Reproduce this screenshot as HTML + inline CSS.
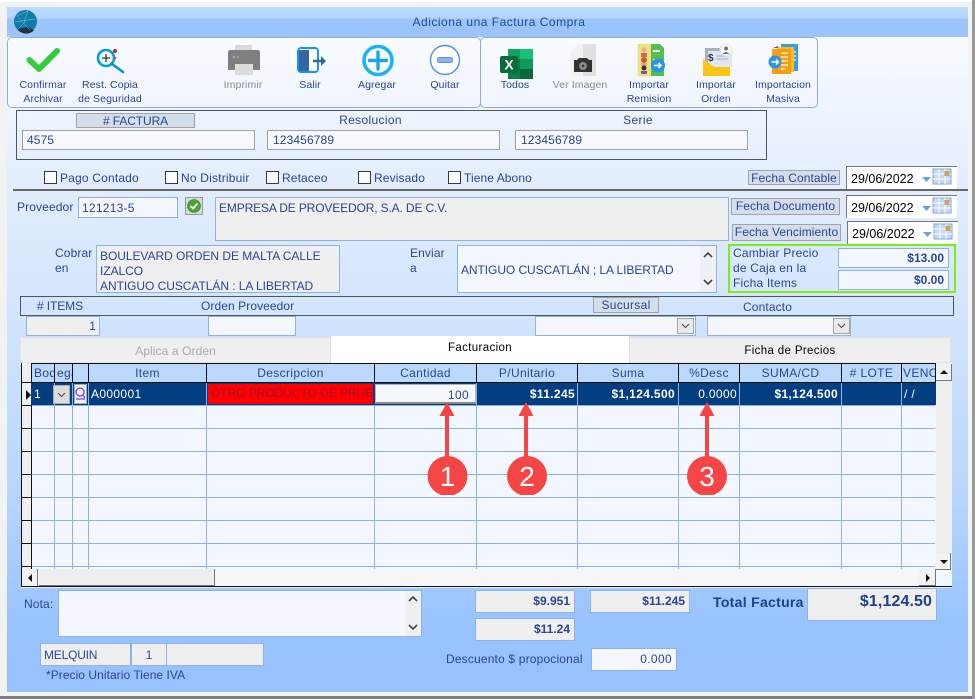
<!DOCTYPE html>
<html><head><meta charset="utf-8">
<style>
html,body{margin:0;padding:0;width:975px;height:699px;overflow:hidden;background:#f2f2f2;font-family:"Liberation Sans",sans-serif;font-size:12px;color:#2a4596;}
div,span,svg{position:absolute;box-sizing:border-box;}
.t{white-space:nowrap;letter-spacing:.12px;line-height:14px;}
.c{text-align:center;}
.r{text-align:right;}
.tb{font-size:10.5px;letter-spacing:.1px;line-height:14px;text-align:center;white-space:nowrap;color:#2a4596;}
.in{background:#f4f7fe;border:1px solid #8fb2e6;}
.ro{background:#efefef;border:1px solid #8fb2e6;}
.g{background:#f7f9fd;border:1px solid #a2a2a2;}
.lb{background:#d3deea;border:1px solid #a3a3a3;text-align:center;white-space:nowrap;letter-spacing:.08px;}
.cb{width:13px;height:13px;background:#fbfcff;border:1px solid #3a3a3a;}
.v{width:1px;background:#8fb2e6;top:383px;height:186px;}
.hl{left:31px;width:904px;height:1px;background:#8fb2e6;}
.h{top:363px;height:20px;background:#bcd9fb;text-align:center;line-height:19px;letter-spacing:.35px;white-space:nowrap;overflow:hidden;border-left:1px solid #111;border-top:1px solid #111;border-bottom:1px solid #111;}
.d{top:383px;height:22px;line-height:22px;color:#fff;white-space:nowrap;letter-spacing:.35px;overflow:hidden;}
.date{background:#fff;border-top:1px solid #777;border-left:1px solid #777;width:111px;height:23px;color:#000;font-size:12.5px;line-height:24px;padding-left:4px;white-space:nowrap;}
</style></head><body>
<div style="left:0;top:0;width:975px;height:2px;background:#fff"></div>
<div style="left:0;top:696px;width:975px;height:3px;background:#7d7d7d"></div>
<div style="left:972px;top:0;width:3px;height:699px;background:#9a9a9a"></div>
<div style="left:7px;top:7px;width:961px;height:685px;background:linear-gradient(#f9fbff 30px,#e6f0fe 150px,#cfe3fe 330px,#b9d6ff 480px,#98c3ff 620px,#97c2ff 685px)"></div>
<div style="left:7px;top:7px;width:961px;height:30px;background:linear-gradient(#bcdcff 0,#b2d4ff 11px,#9bc5fb 12px,#9bc4fa 30px)"></div>

<svg style="left:14px;top:10px" width="24" height="24" viewBox="0 0 24 24"><circle cx="11.500" cy="11.500" r="11.500" fill="#0f7ba8"/><path d="M3 19a11.500 11.500 0 0 0 17 1.500L14 17z" fill="#27303f"/><path d="M3 6l13 14M3 6l11-5M14 1l-4 12M1 12l20-3M10 13l-7 7" stroke="#8fc4dc" stroke-width=".5" fill="none"/></svg>
<div class="t c" style="left:7px;top:15px;width:984px;color:#1f4a94;letter-spacing:.5px">Adiciona una Factura Compra</div>

<!-- toolbars -->
<div style="left:7px;top:37px;width:474px;height:71px;border:1px solid #8cadde;border-radius:5px;background:linear-gradient(#f8fbff,#f1f6fe)"></div>
<div style="left:480px;top:37px;width:338px;height:71px;border:1px solid #8cadde;border-radius:5px;background:linear-gradient(#f8fbff,#f1f6fe)"></div>

<svg style="left:26px;top:47px" width="34" height="26" viewBox="0 0 34 26"><path d="M3.500 13L13 22 31 4" fill="none" stroke="#36cb3d" stroke-width="6" stroke-linecap="round" stroke-linejoin="round"/></svg>
<svg style="left:95px;top:47px" width="30" height="27" viewBox="0 0 30 27"><circle cx="11" cy="11" r="8" fill="#eef8fc" stroke="#0aa0c6" stroke-width="2.600"/><path d="M7 11h8M11 7v8" stroke="#333" stroke-width="1.300"/><path d="M17 17l11 8" stroke="#0a90c8" stroke-width="2.600" stroke-linecap="round"/><circle cx="20" cy="4" r="2" fill="#a33"/><circle cx="20" cy="11" r="1.200" fill="#e33"/></svg>
<svg style="left:227px;top:45px" width="34" height="31" viewBox="0 0 34 31"><path d="M8 0h17v9H8z" fill="#d9d9d9"/><path d="M1 7q0-2 3-2h26q3 0 3 2v18H1z" fill="#7f7f7f"/><path d="M8 19h18v11H8z" fill="#dcdcdc"/><circle cx="7" cy="12" r="1.200" fill="#a8a8a8"/><circle cx="11" cy="12" r="1" fill="#a8a8a8"/></svg>
<svg style="left:297px;top:47px" width="30" height="27" viewBox="0 0 30 27"><rect x="1" y="1" width="20" height="24" rx="3" fill="#fff" stroke="#1a94f0" stroke-width="2"/><path d="M2 3h10v21H2z" fill="#32689f"/><path d="M16 14h10" stroke="#32689f" stroke-width="2.500"/><path d="M24 9l5 5-5 5z" fill="#32689f"/></svg>
<svg style="left:361px;top:44px" width="34" height="33" viewBox="0 0 34 33"><circle cx="17" cy="16.500" r="14" fill="#fff" stroke="#1cb4f0" stroke-width="3.600"/><path d="M8.500 16.500h17M17 8v17" stroke="#1ca6ee" stroke-width="3.400" stroke-linecap="round"/></svg>
<svg style="left:429px;top:44px" width="32" height="32" viewBox="0 0 32 32"><circle cx="16" cy="16" r="14.500" fill="#fff" stroke="#4f8ef0" stroke-width="1.400"/><rect x="8.500" y="13.500" width="15" height="5" rx="2" fill="#8fb2f0" stroke="#4f8ef0"/></svg>

<svg style="left:500px;top:49px" width="33" height="30" viewBox="0 0 33 30"><path d="M8 0h25v30H8z" fill="#0d7d45"/><path d="M20 0h13v10H20z" fill="#19c07a"/><path d="M20 10h13v10H20z" fill="#0e9a5b"/><path d="M20 20h13v10H20z" fill="#0b6a3d"/><path d="M8 0h12v10H8z" fill="#12a263"/><rect x="0" y="7" width="18" height="17" rx="2" fill="#0b6b3a"/><text x="9" y="20.500" text-anchor="middle" font-family="Liberation Sans" font-size="13.500" font-weight="bold" fill="#fff">X</text></svg>
<svg style="left:570px;top:44px" width="27" height="32" viewBox="0 0 27 32"><path d="M1 7L8 0h18v32H1z" fill="#f2f2f2"/><path d="M13 0h13v32H13z" fill="#e1e1e1"/><path d="M4 16h3l2-2h8l2 2h3v12H4z" fill="#333"/><circle cx="13" cy="22" r="4" fill="#888"/><circle cx="13" cy="22" r="1.200" fill="#333"/></svg>
<svg style="left:637px;top:44px" width="30" height="33" viewBox="0 0 30 33"><path d="M1 0h13v32H1z" fill="#f2e27c" stroke="#cfe08f" stroke-width=".5"/><path d="M14 0h9l4 4v28H14z" fill="#58bd4c"/><circle cx="7" cy="6" r="2.500" fill="#e8b090"/><path d="M4 9h6v4H4z" fill="#c66"/><circle cx="7" cy="16" r="3" fill="#c85a3a"/><path d="M4 19h6v3H4z" fill="#e8a090"/><circle cx="7" cy="24" r="2.500" fill="#333"/><path d="M4 27h6v3H4z" fill="#7a52b0"/><path d="M16 6h7v2h-7zM16 15h6v2h-6zM16 24h6v2h-6z" fill="#fff"/><circle cx="21" cy="21.500" r="7" fill="#2a95ee"/><path d="M17 21.500h7M21.500 19l2.500 2.500-2.500 2.500" stroke="#fff" stroke-width="1.600" fill="none"/></svg>
<svg style="left:703px;top:44px" width="30" height="32" viewBox="0 0 30 32"><path d="M2 4h24v20H2z" fill="#a9b0bd"/><path d="M5 7h24v16H5z" fill="#dfe6f2"/><text x="5" y="17" font-family="Liberation Sans" font-size="10" font-weight="bold" fill="#333">$</text><path d="M13 12h12M13 15h12" stroke="#aab"/><path d="M0 15l11 8h16v9H0z" fill="#fdc513"/><circle cx="23" cy="6" r="6" fill="#fff" stroke="#ddd"/><circle cx="23" cy="4.500" r="2" fill="#a06a4a"/><path d="M19.500 10q3.500-4 7 0z" fill="#1a88cc"/></svg>
<svg style="left:768px;top:44px" width="32" height="31" viewBox="0 0 32 31"><path d="M13 0h17v27H13z" fill="#3a9af0"/><path d="M9 3h17v25H9z" fill="#fcc013"/><path d="M5 4l5-2v2z" fill="#7a3fb0"/><path d="M4 5h19v25H4z" fill="#fa9c0e"/><path d="M13 9h7M13 13h7M13 17h7M13 21h7M13 25h5M26 8h2M26 12h2M26 16h2" stroke="#fff" stroke-width="1.300"/><circle cx="7" cy="18" r="6.500" fill="#2a95ee"/><path d="M3.500 18h6.500M8 15.500l2.500 2.500-2.500 2.500" stroke="#fff" stroke-width="1.500" fill="none"/></svg>

<div class="tb" style="left:11px;top:78px;width:64px">Confirmar<br>Archivar</div>
<div class="tb" style="left:70px;top:78px;width:80px">Rest. Copia<br>de Seguridad</div>
<div class="tb" style="left:213px;top:78px;width:60px;color:#8c8c8c">Imprimir</div>
<div class="tb" style="left:280px;top:78px;width:60px">Salir</div>
<div class="tb" style="left:347px;top:78px;width:60px">Agregar</div>
<div class="tb" style="left:415px;top:78px;width:60px">Quitar</div>
<div class="tb" style="left:485px;top:78px;width:60px">Todos</div>
<div class="tb" style="left:545px;top:78px;width:70px;color:#8c8c8c">Ver Imagen</div>
<div class="tb" style="left:619px;top:78px;width:60px">Importar<br>Remision</div>
<div class="tb" style="left:686px;top:78px;width:60px">Importar<br>Orden</div>
<div class="tb" style="left:748px;top:78px;width:70px">Importacion<br>Masiva</div>

<!-- factura -->
<div style="left:16px;top:110px;width:751px;height:50px;border:1px solid #555"></div>
<div class="lb" style="left:76px;top:113px;width:119px;height:15px;line-height:14px;letter-spacing:-.1px;">#&nbsp;FACTURA</div>
<div class="t c" style="left:267px;top:113px;width:207px;letter-spacing:.35px">Resolucion</div>
<div class="t c" style="left:515px;top:113px;width:246px;letter-spacing:.35px">Serie</div>
<div class="g t" style="left:22px;top:130px;width:233px;height:20px;line-height:19px;padding-left:4px;">4575</div>
<div class="g t" style="left:267px;top:130px;width:233px;height:20px;line-height:19px;padding-left:5px">123456789</div>
<div class="g t" style="left:515px;top:130px;width:233px;height:20px;line-height:19px;padding-left:5px">123456789</div>

<!-- checks -->
<div class="cb" style="left:44px;top:171px"></div><div class="t" style="left:60px;top:171px;letter-spacing:.18px">Pago Contado</div>
<div class="cb" style="left:165px;top:171px"></div><div class="t" style="left:181px;top:171px;letter-spacing:.2px">No Distribuir</div>
<div class="cb" style="left:266px;top:171px"></div><div class="t" style="left:282px;top:171px">Retaceo</div>
<div class="cb" style="left:358px;top:171px"></div><div class="t" style="left:374px;top:171px">Revisado</div>
<div class="cb" style="left:448px;top:171px"></div><div class="t" style="left:464px;top:171px;letter-spacing:.08px">Tiene Abono</div>
<div class="lb" style="left:748px;top:170px;width:92px;height:15px;line-height:14px;">Fecha Contable</div>

<div class="date" style="left:846px;top:166px">29/06/2022</div>
<svg style="left:921px;top:168px" width="36" height="20" viewBox="0 0 36 20"><rect width="36" height="20" fill="#fff"/><path d="M1 9h9l-4.500 5z" fill="#6f9fe0"/><rect x="12" y="1" width="18" height="15" fill="#c7d7f5" stroke="#7aa6e8"/><path d="M18 1v15M24 1v15M12 6h18M12 11h18" stroke="#fff"/><rect x="23.500" y="3" width="5" height="5" fill="#c8a858"/></svg>

<div style="left:13px;top:189px;width:955px;height:2px;background:#666"></div>

<!-- proveedor -->
<div class="t" style="left:17px;top:200px">Proveedor</div>
<div class="in t" style="left:78px;top:197px;width:100px;height:21px;line-height:20px;padding-left:3px;letter-spacing:.25px">121213-5</div>
<div style="left:185px;top:197px;width:18px;height:18px;background:#d5dbe3;border:1px solid #999"></div>
<svg style="left:187px;top:199px" width="14" height="14" viewBox="0 0 14 14"><circle cx="7" cy="7" r="6.500" fill="#4ca62e" stroke="#2f7a1c" stroke-width=".6"/><path d="M3.500 7l2.500 2.500 4.500-5" stroke="#fff" stroke-width="1.700" fill="none"/></svg>
<div class="ro t" style="left:215px;top:197px;width:514px;height:44px;padding:3px 3px;line-height:14px;letter-spacing:-.14px">EMPRESA DE PROVEEDOR, S.A. DE C.V.</div>

<div class="lb" style="left:731px;top:198px;width:109px;height:17px;line-height:15px;">Fecha Documento</div>
<div class="lb" style="left:732px;top:224px;width:109px;height:17px;line-height:15px;">Fecha Vencimiento</div>
<div class="date" style="left:846px;top:195px">29/06/2022</div>
<svg style="left:921px;top:197px" width="36" height="20" viewBox="0 0 36 20"><rect width="36" height="20" fill="#fff"/><path d="M1 9h9l-4.500 5z" fill="#6f9fe0"/><rect x="12" y="1" width="18" height="15" fill="#c7d7f5" stroke="#7aa6e8"/><path d="M18 1v15M24 1v15M12 6h18M12 11h18" stroke="#fff"/><rect x="23.500" y="3" width="5" height="5" fill="#c8a858"/></svg>
<div class="date" style="left:847px;top:221px">29/06/2022</div>
<svg style="left:922px;top:223px" width="36" height="20" viewBox="0 0 36 20"><rect width="36" height="20" fill="#fff"/><path d="M1 9h9l-4.500 5z" fill="#6f9fe0"/><rect x="12" y="1" width="18" height="15" fill="#c7d7f5" stroke="#7aa6e8"/><path d="M18 1v15M24 1v15M12 6h18M12 11h18" stroke="#fff"/><rect x="23.500" y="3" width="5" height="5" fill="#c8a858"/></svg>

<div class="t" style="left:55px;top:246px;line-height:15px">Cobrar<br>en</div>
<div class="ro t" style="left:96px;top:245px;width:244px;height:48px;padding:3px 3px;line-height:15px;letter-spacing:-.05px">BOULEVARD ORDEN DE MALTA CALLE<br>IZALCO<br>ANTIGUO CUSCATLÁN : LA LIBERTAD</div>
<div class="t" style="left:410px;top:246px;line-height:15px">Enviar<br>a</div>
<div class="in t" style="left:457px;top:245px;width:260px;height:48px;padding-left:3px;line-height:49px;letter-spacing:-.07px">ANTIGUO CUSCATLÁN ; LA LIBERTAD</div>
<div style="left:700px;top:246px;width:16px;height:46px;background:#eef0f4"></div>
<svg style="left:703px;top:251px" width="10" height="36" viewBox="0 0 10 36"><path d="M1 6l4-4 4 4M1 29l4 4 4-4" stroke="#444" stroke-width="1.600" fill="none"/></svg>

<div style="left:728px;top:244px;width:228px;height:49px;border:2px solid #7eed12"></div>
<div class="t" style="left:733px;top:246px;line-height:15px;letter-spacing:.2px">Cambiar Precio<br>de Caja en la<br>Ficha Items</div>
<div class="in t r" style="left:838px;top:248px;width:111px;height:20px;line-height:19px;padding-right:4px;font-weight:bold;letter-spacing:0">$13.00</div>
<div class="in t r" style="left:838px;top:270px;width:111px;height:20px;line-height:19px;padding-right:4px;font-weight:bold;letter-spacing:0">$0.00</div>

<!-- items bar -->
<div style="left:20px;top:296px;width:934px;height:20px;border:1px solid #555"></div>
<div class="t" style="left:37px;top:299px;letter-spacing:-.1px">#&nbsp;ITEMS</div>
<div class="t" style="left:201px;top:299px;letter-spacing:.08px">Orden Proveedor</div>
<div class="lb" style="left:593px;top:297px;width:66px;height:16px;line-height:15px;letter-spacing:.3px">Sucursal</div>
<div class="t" style="left:743px;top:300px">Contacto</div>
<div class="ro t r" style="left:26px;top:316px;width:74px;height:20px;line-height:19px;padding-right:3px">1</div>
<div class="in" style="left:208px;top:316px;width:88px;height:20px"></div>
<div class="in" style="left:535px;top:316px;width:161px;height:20px"></div>
<div class="in" style="left:707px;top:316px;width:144px;height:20px"></div>
<div style="left:677px;top:318px;width:17px;height:16px;background:#e9e9e9;border:1px solid #a5a5a5"></div>
<div style="left:833px;top:318px;width:17px;height:16px;background:#e9e9e9;border:1px solid #a5a5a5"></div>
<svg style="left:677px;top:318px" width="17" height="16"><path d="M5 6l3.500 3.500L12 6" stroke="#555" fill="none" stroke-width="1.200"/></svg>
<svg style="left:833px;top:318px" width="17" height="16"><path d="M5 6l3.500 3.500L12 6" stroke="#555" fill="none" stroke-width="1.200"/></svg>

<!-- tabs -->
<div class="t c" style="left:20px;top:337px;width:311px;height:26px;background:#efefef;border:1px solid #e4e4e4;line-height:26px;color:#aaa;letter-spacing:.1px">Aplica a Orden</div>
<div class="t c" style="left:331px;top:336px;width:298px;height:27px;background:#fff;line-height:25px;color:#000;font-size:11.500px;letter-spacing:.35px">Facturacion</div>
<div class="t c" style="left:629px;top:337px;width:322px;height:26px;background:#efefef;border:1px solid #e4e4e4;line-height:26px;color:#000;font-size:11.500px;letter-spacing:.35px">Ficha de Precios</div>

<!-- grid -->
<div style="left:21px;top:363px;width:931px;height:225px;background:#f3f7ff;"></div>
<div style="left:21px;top:363px;width:915px;height:1px;background:#111"></div>
<div style="left:21px;top:363px;width:11px;height:206px;background:#efefef;border-left:1px solid #111;border-right:1px solid #111"></div>
<div class="h" style="left:31px;width:23px;text-align:left;padding-left:2px">Bode</div>
<div class="h" style="left:54px;width:18px;text-align:left;padding-left:2px">ega</div>
<div class="h" style="left:72px;width:16px"></div>
<div class="h" style="left:88px;width:118px">Item</div>
<div class="h" style="left:206px;width:168px">Descripcion</div>
<div class="h" style="left:374px;width:102px">Cantidad</div>
<div class="h" style="left:476px;width:101px">P/Unitario</div>
<div class="h" style="left:577px;width:101px">Suma</div>
<div class="h" style="left:678px;width:61px">%Desc</div>
<div class="h" style="left:739px;width:102px">SUMA/CD</div>
<div class="h" style="left:841px;width:60px">#&nbsp;LOTE</div>
<div class="h" style="left:901px;width:35px;text-align:left;padding-left:1px;border-right:1px solid #111">VENC</div>

<div style="left:22px;top:382px;width:914px;height:1px;background:#111"></div>
<div class="v" style="left:54px"></div><div class="v" style="left:72px"></div><div class="v" style="left:88px"></div><div class="v" style="left:206px"></div><div class="v" style="left:374px"></div><div class="v" style="left:476px"></div><div class="v" style="left:577px"></div><div class="v" style="left:678px"></div><div class="v" style="left:739px"></div><div class="v" style="left:841px"></div><div class="v" style="left:901px"></div>
<div class="hl" style="top:405px"></div><div class="hl" style="top:428px"></div><div class="hl" style="top:451px"></div><div class="hl" style="top:474px"></div><div class="hl" style="top:497px"></div><div class="hl" style="top:520px"></div><div class="hl" style="top:543px"></div><div class="hl" style="top:566px"></div>
<div style="left:21px;top:405px;width:11px;height:1px;background:#111"></div>
<div style="left:21px;top:428px;width:11px;height:1px;background:#111"></div>
<div style="left:21px;top:451px;width:11px;height:1px;background:#111"></div>
<div style="left:21px;top:474px;width:11px;height:1px;background:#111"></div>
<div style="left:21px;top:497px;width:11px;height:1px;background:#111"></div>
<div style="left:21px;top:520px;width:11px;height:1px;background:#111"></div>
<div style="left:21px;top:543px;width:11px;height:1px;background:#111"></div>
<div style="left:21px;top:566px;width:11px;height:1px;background:#111"></div>

<!-- selected row -->
<div style="left:31px;top:383px;width:905px;height:22px;background:#033f80"></div>
<div style="left:54px;top:383px;width:1px;height:22px;background:#8fb2e6"></div><div style="left:72px;top:383px;width:1px;height:22px;background:#8fb2e6"></div><div style="left:88px;top:383px;width:1px;height:22px;background:#8fb2e6"></div><div style="left:206px;top:383px;width:1px;height:22px;background:#8fb2e6"></div><div style="left:476px;top:383px;width:1px;height:22px;background:#8fb2e6"></div><div style="left:577px;top:383px;width:1px;height:22px;background:#8fb2e6"></div><div style="left:678px;top:383px;width:1px;height:22px;background:#8fb2e6"></div><div style="left:739px;top:383px;width:1px;height:22px;background:#8fb2e6"></div><div style="left:841px;top:383px;width:1px;height:22px;background:#8fb2e6"></div><div style="left:901px;top:383px;width:1px;height:22px;background:#8fb2e6"></div>
<svg style="left:25px;top:390px" width="6" height="10"><path d="M1 0l5 5-5 5z" fill="#111"/></svg>
<div class="d" style="left:34px;width:18px">1</div>
<div style="left:53px;top:385px;width:17px;height:19px;background:#dcdcdc;border:1px solid #aaa"></div>
<svg style="left:53px;top:385px" width="17" height="19"><path d="M5 8l3.500 3.500L12 8" stroke="#555" fill="none" stroke-width="1.200"/></svg>
<div style="left:74px;top:384px;width:13px;height:20px;background:#eef2fb;border:1px solid #aaa"></div>
<svg style="left:75px;top:386px" width="11" height="16"><circle cx="5" cy="6" r="4" fill="none" stroke="#7a3fe0" stroke-width="1.300"/><path d="M8 9l2 3M1 13h9" stroke="#7a3fe0" stroke-width="1.200"/></svg>
<div class="d" style="left:91px;width:110px">A000001</div>
<div class="d" style="left:208px;top:384px;width:165px;height:20px;background:#fe0000;color:#a0102c;line-height:19px;padding-left:3px;letter-spacing:-.05px">OTRO PRODUCTO DE PRUE</div>
<div class="t r" style="left:375px;top:384px;width:101px;height:20px;background:#f6f8fe;border:1px solid #b4b4b4;border-bottom:2px solid #8a8a8a;line-height:21px;padding-right:6px;letter-spacing:.35px">100</div>
<div class="d r" style="left:477px;width:99px;padding-right:1px;font-weight:bold">$11.245</div>
<div class="d r" style="left:578px;width:99px;padding-right:2px;font-weight:bold">$1,124.500</div>
<div class="d r" style="left:679px;width:59px;padding-right:1px">0.0000</div>
<div class="d r" style="left:740px;width:100px;padding-right:2px;font-weight:bold">$1,124.500</div>
<div class="d" style="left:904px;width:30px">/ /</div>

<!-- annotations -->
<svg style="left:420px;top:395px" width="310" height="100" viewBox="0 0 310 100">
<g fill="#f64545"><path d="M26 7l-7.500 14h5.500v50h4V21h5.500z" transform="translate(1 0)"/><path d="M106 7l-7.500 14h5.500v50h4V21h5.500z"/><path d="M287 7l-7.500 14h5.500v50h4V21h5.500z"/>
<circle cx="27.500" cy="81" r="20"/><circle cx="107" cy="81" r="20"/><circle cx="287" cy="81" r="20"/></g>
<g fill="#fff" font-family="Liberation Sans" font-size="28" text-anchor="middle"><text x="27.500" y="91">1</text><text x="107" y="91">2</text><text x="287" y="91">3</text></g></svg>

<!-- scrollbars -->
<div style="left:936px;top:363px;width:16px;height:225px;background:#eeeeee"></div>
<div style="left:936px;top:364px;width:16px;height:17px;background:#f2f2f2;border-right:1px solid #777;border-bottom:1px solid #777"></div>
<svg style="left:938px;top:368px" width="12" height="8"><path d="M2 6h8L6 2z" fill="#111"/></svg>
<div style="left:936px;top:553px;width:15px;height:17px;background:#f2f2f2;border-right:1px solid #777;border-bottom:1px solid #777"></div>
<svg style="left:938px;top:558px" width="12" height="8"><path d="M2 2h8L6 6z" fill="#111"/></svg>
<div style="left:22px;top:569px;width:914px;height:17px;background:#f6f6f6"></div>
<div style="left:936px;top:570px;width:16px;height:18px;background:#f3f7ff"></div>
<div style="left:21px;top:569px;width:1px;height:17px;background:#111"></div>
<div style="left:22px;top:569px;width:16px;height:17px;background:#f2f2f2;border-right:1px solid #777"></div>
<svg style="left:26px;top:573px" width="8" height="10"><path d="M6 1v8L2 5z" fill="#111"/></svg>
<div style="left:39px;top:569px;width:176px;height:17px;background:#efefef;border-right:1px solid #777;border-bottom:1px solid #777"></div>
<div style="left:919px;top:569px;width:17px;height:17px;background:#f2f2f2;border-right:1px solid #777;border-bottom:1px solid #777"></div>
<svg style="left:924px;top:573px" width="8" height="10"><path d="M2 1v8l4-4z" fill="#111"/></svg>
<div style="left:21px;top:586px;width:931px;height:1px;background:#111"></div>
<div style="left:21px;top:587px;width:931px;height:1px;background:#e6eefc"></div>

<!-- bottom -->
<div class="t" style="left:24px;top:597px">Nota:</div>
<div class="in" style="left:58px;top:590px;width:364px;height:47px"></div>
<div style="left:405px;top:591px;width:16px;height:45px;background:#eef0f4"></div>
<svg style="left:408px;top:596px" width="10" height="36" viewBox="0 0 10 36"><path d="M1 5l4-4 4 4M1 29l4 4 4-4" stroke="#444" stroke-width="1.600" fill="none"/></svg>
<div class="ro t" style="left:40px;top:643px;width:91px;height:23px;line-height:22px;padding-left:3px;letter-spacing:-.2px">MELQUIN</div>
<div class="ro t c" style="left:131px;top:643px;width:36px;height:23px;line-height:22px;">1</div>
<div class="ro" style="left:166px;top:643px;width:98px;height:23px"></div>
<div class="t" style="left:46px;top:668px;letter-spacing:.05px">*Precio Unitario Tiene IVA</div>

<div class="ro t r" style="left:475px;top:590px;width:100px;height:23px;line-height:20px;padding-right:4px;font-weight:bold;letter-spacing:0">$9.951</div>
<div class="ro t r" style="left:590px;top:590px;width:100px;height:23px;line-height:20px;padding-right:4px;font-weight:bold;letter-spacing:0">$11.245</div>
<div class="ro t r" style="left:475px;top:618px;width:100px;height:23px;line-height:20px;padding-right:4px;font-weight:bold;letter-spacing:0">$11.24</div>
<div class="t" style="left:446px;top:652px;letter-spacing:.17px">Descuento $ propocional</div>
<div class="in t r" style="left:591px;top:648px;width:86px;height:23px;line-height:21px;padding-right:4px;letter-spacing:.35px">0.000</div>
<div class="t" style="left:713px;top:595px;font-size:14px;font-weight:bold;letter-spacing:.3px;color:#1d3f8e">Total Factura</div>
<div class="ro t r" style="left:807px;top:588px;width:130px;height:33px;line-height:25px;padding-right:4px;font-size:16px;font-weight:bold;letter-spacing:.1px;color:#1d3f8e">$1,124.50</div>
</body></html>
